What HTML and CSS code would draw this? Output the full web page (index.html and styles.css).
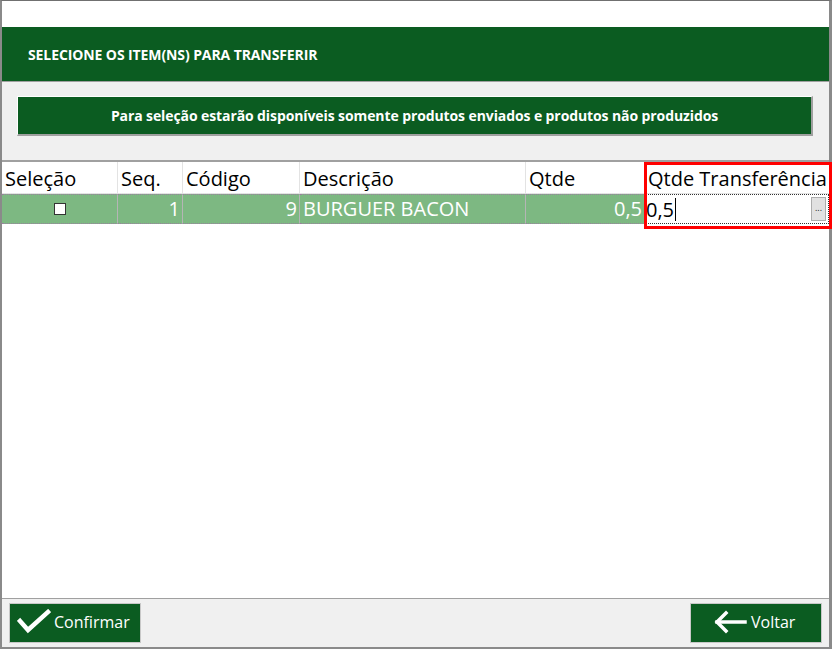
FILE: index.html
```html
<!DOCTYPE html>
<html lang="pt">
<head>
<meta charset="utf-8">
<title>Transferir itens</title>
<link rel="stylesheet" href="styles.css">
</head>
<body>
<div class="window">
  <div class="topgap"></div>
  <div class="title-bar">SELECIONE OS ITEM(NS) PARA TRANSFERIR</div>
  <div class="info-panel">
    <div class="banner">Para seleção estarão disponíveis somente produtos enviados e produtos não produzidos</div>
  </div>
  <div class="grid-area">
    <div class="grid">
      <div class="hcell">Seleção</div>
      <div class="hcell">Seq.</div>
      <div class="hcell">Código</div>
      <div class="hcell">Descrição</div>
      <div class="hcell">Qtde</div>
      <div class="hcell last">Qtde Transferência</div>
      <div class="dcell center"><span class="chk"></span></div>
      <div class="dcell right">1</div>
      <div class="dcell right">9</div>
      <div class="dcell">BURGUER BACON</div>
      <div class="dcell right">0,5</div>
      <div class="edit-cell"><span class="edit-val">0,5</span><span class="caret"></span><span class="ellip">...</span></div>
    </div>
    <div class="highlight"></div>
  </div>
  <div class="footer">
    <button class="btn">
      <svg width="34" height="26" viewBox="0 0 34 26"><polyline points="3,12 11,21 31,3" fill="none" stroke="#fff" stroke-width="4.5" stroke-linecap="square"/></svg>
      <span>Confirmar</span>
    </button>
    <button class="btn back">
      <svg width="34" height="24" viewBox="0 0 34 24"><g fill="none" stroke="#fff" stroke-width="3.5" stroke-linecap="square"><line x1="4" y1="12" x2="32" y2="12"/><polyline points="13,3 4,12 13,21"/></g></svg>
      <span>Voltar</span>
    </button>
  </div>
</div>
</body>
</html>
```
FILE: styles.css
```css
* { box-sizing: border-box; }
html, body { margin: 0; padding: 0; }
body {
  width: 832px;
  height: 649px;
  background: #fff;
  font-family: "Open Sans", "Noto Sans", sans-serif;
  overflow: hidden;
}
.window {
  width: 832px;
  height: 649px;
  border-top: 1px solid #707070;
  border-left: 2px solid #8a8a8a;
  border-right: 3px solid #8a8a8a;
  display: flex;
  flex-direction: column;
  background: #fff;
}
.topgap { height: 26px; flex: none; }
.title-bar {
  height: 55px;
  flex: none;
  background: #0b5c21;
  color: #fff;
  font-weight: 700;
  font-size: 14px;
  padding-left: 26px;
  display: flex;
  align-items: center;
  border-bottom: 1px solid #a0a0a0;
  letter-spacing: -0.1px;
}
.info-panel {
  height: 80px;
  flex: none;
  background: #f0f0f0;
  padding: 14px 16px 0 15px;
  border-bottom: 2px solid #a0a0a0;
}
.banner {
  height: 40px;
  background: #0b5c21;
  border-top: 1px solid #fff;
  border-left: 1px solid #fff;
  border-right: 2px solid #a0a0a0;
  border-bottom: 2px solid #a0a0a0;
  color: #fff;
  font-weight: 700;
  font-size: 14px;
  display: flex;
  align-items: center;
  justify-content: center;
  letter-spacing: -0.1px;
}
.grid-area {
  flex: 1;
  position: relative;
  background: #fff;
}
.grid {
  display: grid;
  grid-template-columns: 116px 65px 117px 226px 119px 1fr;
  grid-template-rows: 32px 30px;
}
.hcell {
  font-size: 20px;
  color: #000;
  padding: 2px 0 0 3px;
  border-right: 1px solid #e3e3e3;
  border-bottom: 1px solid #e3e3e3;
  white-space: nowrap;
  line-height: 29px;
}
.hcell.last { border-right: none; }
.dcell {
  background: #7db882;
  color: #fff;
  font-size: 20px;
  line-height: 27px;
  padding: 0 2px 0 3px;
  border-top: 1px dotted #9a7f9f;
  border-bottom: 1px dotted #9a7f9f;
  border-right: 1px solid #b5b5b5;
  white-space: nowrap;
}
.dcell.right { text-align: right; }
.dcell.center { display: flex; align-items: center; justify-content: center; }
.chk {
  width: 12px;
  height: 12px;
  background: #fff;
  border: 1px solid #333;
  display: block;
}
.edit-cell {
  background: #fff;
  border: 1px dotted #333;
  display: flex;
  align-items: center;
  font-size: 20px;
  color: #000;
  padding-left: 0;
  position: relative;
}
.edit-val { line-height: 27px; }
.caret {
  width: 1px;
  height: 23px;
  background: #000;
  margin-left: 1px;
}
.ellip {
  margin-left: auto;
  margin-right: 2px;
  width: 15px;
  height: 24px;
  background: #e1e1e1;
  border: 1px solid #adadad;
  font-size: 9px;
  line-height: 20px;
  text-align: center;
  color: #222;
  overflow: hidden;
}
.highlight {
  position: absolute;
  left: 642px;
  top: 0;
  width: 188px;
  height: 67px;
  border: 3px solid #ff0000;
  pointer-events: none;
}
.footer {
  height: 51px;
  flex: none;
  background: #f0f0f0;
  border-top: 1px solid #a0a0a0;
  border-bottom: 2px solid #8a8a8a;
  display: flex;
  justify-content: space-between;
  align-items: flex-start;
  padding: 4px 7px 0 7px;
}
.btn {
  width: 132px;
  height: 40px;
  background: #0b5c21;
  border: 1px solid #c8c8c8;
  color: #fff;
  font-family: "Open Sans", "Noto Sans", sans-serif;
  font-size: 16px;
  line-height: 20px;
  display: flex;
  align-items: center;
  padding: 0 0 2px 7px;
  gap: 3px;
}
.btn.back { padding-left: 22px; gap: 4px; }
.btn svg { flex: none; }
```
